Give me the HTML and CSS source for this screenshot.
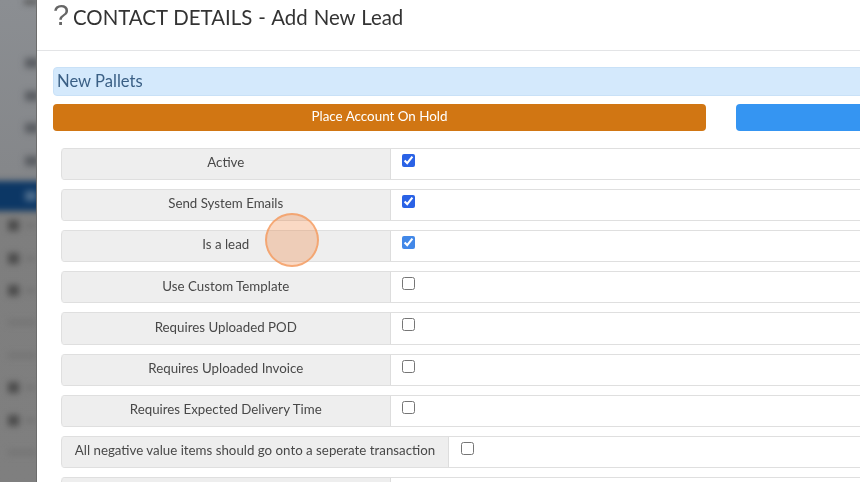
FILE: index.html
```html
<!DOCTYPE html>
<html lang="en">
<head>
<meta charset="utf-8">
<title>Contact Details - Add New Lead</title>
<link rel="stylesheet" href="styles.css">
</head>
<body>
<div class="app">
  <aside class="sidebar">
    <div class="sidebar-inner">
      <div class="top-notch"></div>
      <div class="sub-item"></div>
      <div class="sub-item"></div>
      <div class="sub-item"></div>
      <div class="sub-item"></div>
      <div class="active-item"><span></span></div>
      <div class="nav-item"><i></i><b></b></div>
      <div class="nav-item"><i></i><b></b></div>
      <div class="nav-item"><i></i><b></b></div>
      <div class="nav-item plain"><b></b></div>
      <div class="nav-item plain"><b></b></div>
      <div class="nav-item"><i></i><b></b></div>
      <div class="nav-item"><i></i><b></b></div>
      <div class="nav-item plain"><b></b></div>
    </div>
  </aside>
  <main class="modal">
    <header class="modal-header">
      <span class="help">?</span>
      <h1 class="title">CONTACT DETAILS - Add New Lead</h1>
    </header>
    <div class="modal-body">
      <div class="alert">New Pallets</div>
      <div class="actions">
        <button class="btn btn-hold" type="button">Place Account On Hold</button>
        <button class="btn btn-blue" type="button"></button>
      </div>
      <div class="fields">
        <div class="field"><label class="field-label">Active</label><div class="field-value"><input type="checkbox" checked></div></div>
        <div class="field"><label class="field-label">Send System Emails</label><div class="field-value"><input type="checkbox" checked></div></div>
        <div class="field"><label class="field-label">Is a lead</label><div class="field-value"><input class="focused" type="checkbox" checked></div></div>
        <div class="field"><label class="field-label">Use Custom Template</label><div class="field-value"><input type="checkbox"></div></div>
        <div class="field"><label class="field-label">Requires Uploaded POD</label><div class="field-value"><input type="checkbox"></div></div>
        <div class="field"><label class="field-label">Requires Uploaded Invoice</label><div class="field-value"><input type="checkbox"></div></div>
        <div class="field"><label class="field-label">Requires Expected Delivery Time</label><div class="field-value"><input type="checkbox"></div></div>
        <div class="field"><label class="field-label wide">All negative value items should go onto a seperate transaction</label><div class="field-value"><input type="checkbox"></div></div>
        <div class="field"><label class="field-label"></label><div class="field-value"></div></div>
      </div>
    </div>
  </main>
  <div class="click-marker"></div>
</div>
</body>
</html>
```
FILE: styles.css
```css
* { box-sizing: border-box; }
html, body { margin: 0; height: 482px; overflow: hidden; background: #fff; }
body { font-family: Lato, "Open Sans", sans-serif; color: #444; }
.app { position: relative; display: flex; width: 860px; height: 482px; overflow: hidden; }

.sidebar { width: 37px; flex: none; overflow: hidden; background: linear-gradient(#8b8e92 0, #85878a 170px, #7e7e7e 210px, #7f7f7f 100%); border-right: 1px solid #6c6c6c; }
.sidebar-inner { display: flex; flex-direction: column; filter: blur(3px); }
.top-notch { height: 4px; width: 14px; margin-left: 24px; background: #4c4c4c; flex: none; }
.sub-item { height: 10px; width: 14px; margin: 54px 0 0 25px; background: #5a5d62; flex: none; }
.sub-item + .sub-item { margin-top: 22.5px; }
.active-item { height: 30px; margin-top: 15px; margin-left: -8px; width: 54px; background: #0c3765; display: flex; align-items: center; padding-left: 33px; flex: none; }
.active-item span { width: 12px; height: 10px; background: #4d6c8c; }
.nav-item { display: flex; align-items: center; gap: 6px; height: 32.4px; padding-left: 8px; flex: none; }
.nav-item:nth-child(7) { margin-top: -1px; }
.nav-item i { width: 11px; height: 11px; background: #4c4c4c; flex: none; }
.nav-item b { width: 20px; height: 5px; background: #737373; }
.nav-item.plain b { width: 30px; }

.modal { flex: 1; min-width: 0; background: #fff; }
.modal-header { height: 51px; border-bottom: 1px solid #e3e4e6; display: flex; align-items: flex-start; padding: 0 0 0 16px; filter: blur(0.3px); }
.help { font-family: "Liberation Sans", sans-serif; font-size: 29px; line-height: 30px; color: #666; width: 20px; flex: none; }
.title { margin: 5px 0 0; font-size: 20.4px; line-height: 24px; font-weight: 400; color: #333; word-spacing: 0.8px; white-space: nowrap; }

.modal-body { padding: 16px 0 0 16px; width: 860px; filter: blur(0.3px); }
.alert { height: 29px; line-height: 26px; padding-left: 3px; font-size: 16.6px; color: #3a5f85; background: #d4e9fc; border: 1px solid #c9e1f7; border-radius: 4px; }
.actions { display: flex; gap: 30px; margin-top: 8px; }
.btn { height: 27px; border: 0; border-radius: 4px; color: #fff; font: 400 13.4px Lato, sans-serif; padding: 0 0 3px; }
.btn-hold { width: 653px; background: #d17613; flex: none; }
.btn-blue { flex: 1; background: #3595f2; }

.fields { display: flex; flex-direction: column; gap: 9px; margin: 16.7px 0 0 8px; }
.field { display: flex; height: 32.2px; flex: none; border: 1px solid #dfdfdf; border-width: 1.5px 0 1.5px 0; border-radius: 4px 0 0 4px; }
.field-label { width: 329.5px; flex: none; display: flex; align-items: center; justify-content: center; padding-bottom: 3.5px; font-size: 13.3px; color: #484848; background: #eeeeee; border-left: 1px solid #dfdfdf; border-right: 1.5px solid #dddddd; border-radius: 4px 0 0 4px; white-space: nowrap; }
.field-label.wide { width: 388px; }
.field-value { flex: 1; padding: 5px 0 0 11.5px; }
.field-value input { display: block; width: 13px; height: 13px; margin: 0; accent-color: #2a62e6; }
.field-value input.focused { accent-color: #4288e8; }

.click-marker { position: absolute; left: 265px; top: 213px; width: 54px; height: 54px; border-radius: 50%; background: rgba(240, 130, 60, 0.3); border: 2px solid rgba(245, 150, 85, 0.7); }
```
